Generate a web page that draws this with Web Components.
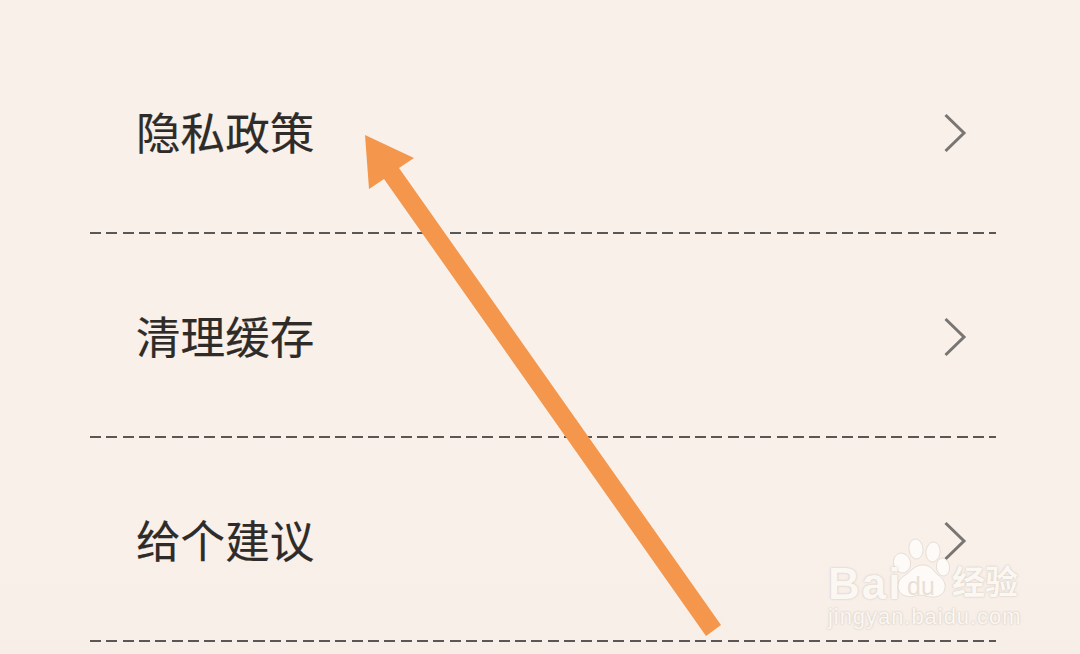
<!DOCTYPE html>
<html>
<head>
<meta charset="utf-8">
<style>
  html, body { margin: 0; padding: 0; }
  body { width: 1080px; height: 654px; overflow: hidden; background: #f8f0e9; }
</style>
</head>
<body>
<settings-page>
  <settings-row>隐私政策</settings-row>
  <settings-row>清理缓存</settings-row>
  <settings-row>给个建议</settings-row>
</settings-page>
<script>
class SettingsRow extends HTMLElement {
  constructor() {
    super();
    this.attachShadow({ mode: 'open' });
  }

  connectedCallback() {
    this.shadowRoot.innerHTML = `
      <style>
        :host {
            display: flex;
            flex-direction: column;
            height: 204px;
        }

        .row {
            flex: 1;
            display: flex;
            align-items: center;
            justify-content: space-between;
            padding: 0 29px 0 46px;
        }

        .label {
            font: 400 44.6px/1 "Noto Sans CJK SC", "Noto Sans", sans-serif;
            color: #2e2b28;
            -webkit-text-stroke: .2px #2e2b28;
        }

        svg {
            display: block;
            width: 24px;
            height: 40px;
            margin-top: 4px;
        }

        .dash {
            height: 2px;
            background: repeating-linear-gradient(90deg, #5a5754 0 11px, transparent 11px 16.35px);
        }
      </style>
      <div class="row">
        <span class="label"><slot></slot></span>
        <svg viewBox="0 0 24 40"><path d="M2.5 2 L21 20 L2.5 38" fill="none" stroke="#787572" stroke-width="3"/></svg>
      </div>
      <div class="dash"></div>
    `;
  }
}

class ArrowMark extends HTMLElement {
  constructor() {
    super();
    this.attachShadow({ mode: 'open' });
  }

  connectedCallback() {
    this.shadowRoot.innerHTML = `
      <style>
        :host { position: absolute; left: 0; top: 0; width: 1080px; height: 654px; pointer-events: none; }
        svg { display: block; }
      </style>
      <svg width="1080" height="654" viewBox="0 0 1080 654">
        <polygon fill="#f4964c" points="365,135 414,158 399,168 721,625 706,636 384,179 369,189"/>
      </svg>
    `;
  }
}

class BaiduMark extends HTMLElement {
  constructor() {
    super();
    this.attachShadow({ mode: 'open' });
  }

  connectedCallback() {
    this.shadowRoot.innerHTML = `
      <style>
        :host {
            position: absolute;
            left: 826px;
            top: 536px;
            width: 200px;
            height: 98px;
            color: #fbf7f3;
            text-shadow: 0 0 2px rgba(150, 135, 120, .5);
        }

        span { position: absolute; white-space: nowrap; line-height: 1; }
        svg { position: absolute; left: 60px; top: 0; }

        .bai { left: 2px; top: 26px; font: 700 44px/1 "Liberation Sans", sans-serif; letter-spacing: 2px; }
        .du { left: 81px; top: 38px; font: 400 25px/1 "Liberation Sans", sans-serif; color: #eadfd6; text-shadow: none; }
        .jy { left: 126px; top: 28px; font: 700 33px/1 "Noto Sans CJK SC", sans-serif; }
        .url { left: 2px; top: 70px; font: 400 22px/1 "Liberation Sans", sans-serif; letter-spacing: .95px; }
      </style>
      <svg width="80" height="66" viewBox="0 0 80 66">
        <g fill="#fdfaf7" stroke="rgba(170,155,140,.35)" stroke-width=".7">
          <ellipse cx="16" cy="27" rx="8.5" ry="10" transform="rotate(-15 16 27)"/>
          <ellipse cx="30" cy="13" rx="7" ry="10" transform="rotate(-6 30 13)"/>
          <ellipse cx="47" cy="16" rx="7" ry="10" transform="rotate(6 47 16)"/>
          <ellipse cx="57" cy="31" rx="6.5" ry="9" transform="rotate(-8 57 31)"/>
          <path d="M37 29 C45 29 47 35 52 39 C62 45 62 60 48 61 C42 61 38 59 34 59 C30 59 26 62 20 60 C9 57 10 45 18 40 C25 36 28 29 37 29 Z"/>
        </g>
      </svg>
      <span class="bai">Bai</span>
      <span class="du">du</span>
      <span class="jy">经验</span>
      <span class="url">jingyan.baidu.com</span>
    `;
  }
}

class SettingsPage extends HTMLElement {
  constructor() {
    super();
    this.attachShadow({ mode: 'open' });
  }

  connectedCallback() {
    this.shadowRoot.innerHTML = `
      <style>
        :host {
            display: block;
            position: relative;
            width: 1080px;
            height: 654px;
            overflow: hidden;
            background: linear-gradient(180deg, #f8f0e9 0 520px, #f7efe8 600px, #f6eee7 100%);
        }

        .list {
            display: flex;
            flex-direction: column;
            padding: 30px 84px 0 90px;
        }
      </style>
      <div class="list"><slot></slot></div>
      <baidu-mark></baidu-mark>
      <arrow-mark></arrow-mark>
    `;
  }
}

// Define the custom elements
customElements.define('settings-row', SettingsRow);
customElements.define('arrow-mark', ArrowMark);
customElements.define('baidu-mark', BaiduMark);
customElements.define('settings-page', SettingsPage);
</script>
</body>
</html>
